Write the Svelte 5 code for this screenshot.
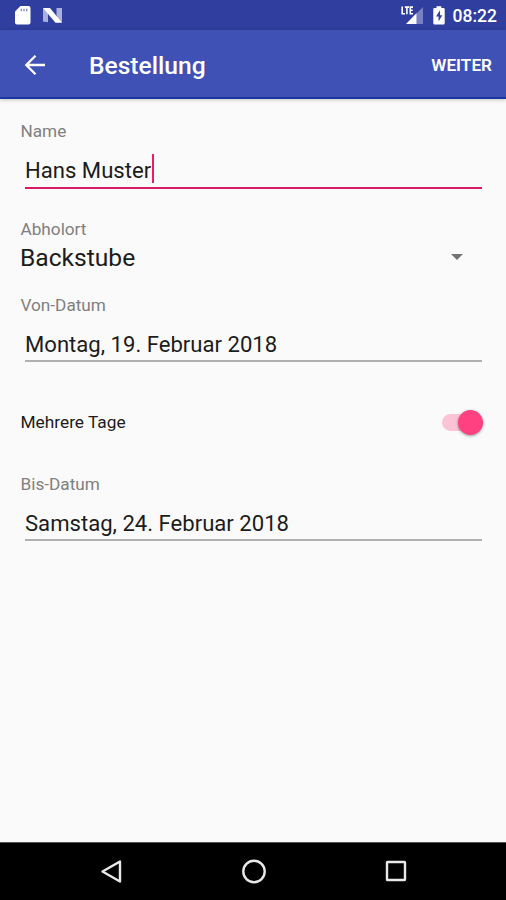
<script>
  let name = $state('Hans Muster');
  let place = $state('Backstube');
  let from = $state('Montag, 19. Februar 2018');
  let to = $state('Samstag, 24. Februar 2018');
  let multipleDays = $state(true);
</script>

<div class="screen">
  <div class="status">
    <svg class="status-left" width="70" height="30" viewBox="0 0 70 30">
      <path fill="#fff" d="M20.5 6H28.5Q30.5 6 30.5 8V22.5Q30.5 24.5 28.5 24.5H17Q15 24.5 15 22.5V11.5Z" />
      <path stroke="#7d86c4" stroke-width="1.3" d="M21.3 8.8V11.3M24 8.8V11.3M26.7 8.8V11.3" />
      <path fill="#a9b0dc" d="M43 8.5L48 8V22.3L43 21.5ZM56.5 8H62V22.5L56.5 21Z" />
      <path fill="#fff" d="M43 8H50L62 22.8H55.5Z" />
    </svg>
    <div class="status-right">
      <svg width="50" height="30" viewBox="0 0 50 30">
        <path fill="none" stroke="#fff" stroke-width="1.6" d="M1.2 6.5V13.7H4M3.8 7.1H8M5.9 7.1V14.3M12 7.1H9.3V13.7H12M9.3 10.3H11.7" />
        <path fill="#7881c4" d="M22 7V24H16V13Z" />
        <path fill="#fff" d="M15.6 13V24H5Z" />
        <path fill="#fff" d="M35.5 6.3H40.3V8H42.5Q43.7 8 43.7 9.2V23.3Q43.7 24.5 42.5 24.5H33.5Q32.3 24.5 32.3 23.3V9.2Q32.3 8 33.5 8H35.5Z" />
        <path fill="#303f9f" d="M39 10.3L35 16.5H37.6V21.5L41.3 15.2H39Z" />
      </svg>
      <span class="clock">08:22</span>
    </div>
  </div>

  <header class="toolbar">
    <svg class="back" width="22" height="22" viewBox="0 0 22 22">
      <path fill="none" stroke="#fff" stroke-width="2.3" d="M21 11H2.5M11.5 1.8L2.3 11L11.5 20.2" />
    </svg>
    <h1>Bestellung</h1>
    <button class="next">WEITER</button>
  </header>

  <main>
    <p class="label">Name</p>
    <div class="input input--focused">{name}<i class="caret"></i></div>

    <p class="label label--place">Abholort</p>
    <div class="spinner">
      <span>{place}</span>
      <svg width="12" height="6" viewBox="0 0 12 6">
        <path fill="#737373" d="M0 0H12L6 6Z" />
      </svg>
    </div>

    <p class="label label--from">Von-Datum</p>
    <div class="input">{from}</div>

    <div class="switch-row">
      <span class="switch-text">Mehrere Tage</span>
      <div class="switch" class:switch--on={multipleDays}>
        <div class="thumb"></div>
      </div>
    </div>

    <p class="label">Bis-Datum</p>
    <div class="input">{to}</div>
  </main>

  <nav>
    <svg width="24" height="26" viewBox="0 0 24 26">
      <path d="M21 2.5V22.5L3.500 12.500Z" />
    </svg>
    <svg width="26" height="26" viewBox="0 0 26 26">
      <circle cx="13" cy="12.5" r="10.7" />
    </svg>
    <svg width="24" height="26" viewBox="0 0 24 26">
      <rect x="3" y="3" width="18" height="18" rx="0.5" />
    </svg>
  </nav>
</div>

<style>
  :global(body) {
    background: #fafafa;
  }

  .screen {
    width: 506px;
    height: 900px;
    display: flex;
    flex-direction: column;
    overflow: hidden;
    background: #fafafa;
    font-family: Roboto, sans-serif;
    color: #1c1c1c;
  }

  .status {
    height: 30px;
    flex: none;
    display: flex;
    justify-content: space-between;
    background: #303f9f;
  }

  .status-right {
    display: flex;
    padding-right: 9px;
    color: #fff;
  }

  .clock {
    margin-left: 2px;
    font-size: 17.5px;
    font-weight: 500;
    line-height: 32px;
  }

  .toolbar {
    height: 69px;
    flex: none;
    box-sizing: border-box;
    display: flex;
    align-items: center;
    padding: 3px 14px 0 24px;
    background: #3f51b5;
    border-bottom: 2px solid #1c36a4;
    box-shadow: 0 1px 4px rgba(0, 0, 0, 0.22);
    color: #fff;
  }

  .back {
    margin-top: -1px;
  }

  h1 {
    flex: 1;
    margin: 2px 0 0 43px;
    font-size: 24.6px;
    font-weight: 500;
    line-height: 30px;
  }

  .next {
    padding: 0;
    border: 0;
    background: none;
    color: inherit;
    font: 600 17.2px/20px Roboto, sans-serif;
  }

  main {
    flex: 1;
    padding: 22px 24px 0 20px;
  }

  .label {
    margin: 0;
    padding-left: 0.5px;
    font-size: 17.2px;
    line-height: 20px;
    color: #808080;
  }

  .label--place {
    margin-top: 30px;
  }

  .label--from {
    margin-top: 20px;
  }

  .input {
    height: 47px;
    box-sizing: border-box;
    display: flex;
    align-items: center;
    margin-left: 5px;
    padding-top: 12px;
    border-bottom: 2px solid #b0b0b0;
    font-size: 22.1px;
  }

  .input--focused {
    height: 48px;
    border-bottom-color: #d81b60;
  }

  .caret {
    width: 2px;
    height: 29px;
    margin: -3px 0 0 0.5px;
    background: #e91e63;
  }

  .spinner {
    height: 36px;
    display: flex;
    align-items: center;
    justify-content: space-between;
    padding-right: 19px;
    font-size: 24.6px;
  }

  .switch-row {
    height: 112px;
    box-sizing: border-box;
    display: flex;
    align-items: center;
    justify-content: space-between;
    padding-top: 8px;
  }

  .switch-text {
    padding-left: 0.5px;
    font-size: 17.3px;
  }

  .switch {
    width: 40px;
    height: 17px;
    display: flex;
    align-items: center;
    border-radius: 9px;
    background: #c4c4c4;
  }

  .switch--on {
    justify-content: flex-end;
    background: #fbc4d6;
  }

  .thumb {
    width: 25px;
    height: 25px;
    flex: none;
    margin-right: -1px;
    border-radius: 50%;
    background: #fafafa;
    box-shadow: 0 1px 3px rgba(0, 0, 0, 0.4);
  }

  .switch--on .thumb {
    background: #ff4081;
  }

  nav {
    height: 58px;
    flex: none;
    box-sizing: border-box;
    display: flex;
    align-items: center;
    justify-content: space-between;
    padding: 0 98px 0 99px;
    background: #000;
    border-top: 1px solid #555;
  }

  nav svg {
    fill: none;
    stroke: #e8e8e8;
    stroke-width: 2.4;
    stroke-linejoin: round;
  }
</style>
